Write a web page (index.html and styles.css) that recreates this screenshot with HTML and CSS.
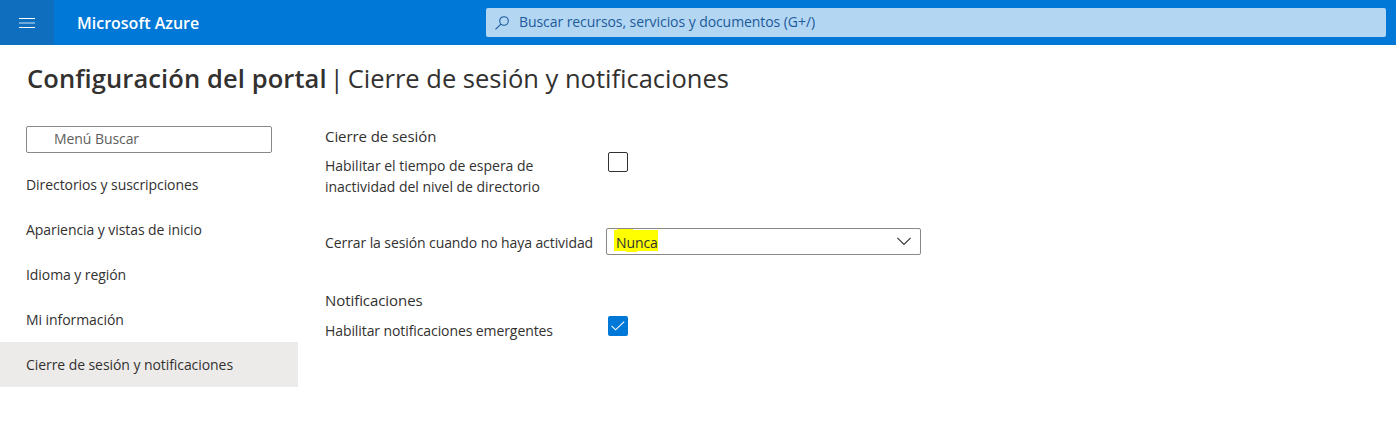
FILE: index.html
```html
<!DOCTYPE html>
<html lang="es">
<head>
<meta charset="utf-8">
<title>Configuración del portal</title>
<link rel="stylesheet" href="styles.css">
</head>
<body>
<header class="topbar">
  <button class="menu-button" aria-label="Menú"><svg width="16" height="10" viewBox="0 0 16 10" shape-rendering="crispEdges"><path fill="#fff" d="M0 0h16v1H0zM0 9h16v1H0z"/><path fill="#6fa8da" d="M0 4h16v2H0z"/></svg></button>
  <div class="brand">Microsoft Azure</div>
  <div class="global-search">
    <svg width="14" height="14" viewBox="0 0 14 14" fill="none" stroke="#1c5a9c" stroke-width="1.1"><circle cx="9" cy="5" r="4.3"/><path d="M5.9 8.1.5 13.4"/></svg>
    <span class="placeholder">Buscar recursos, servicios y documentos (G+/)</span>
  </div>
</header>
<h1 class="page-title"><span class="title-strong">Configuración del portal</span><span class="title-bar">|</span><span>Cierre de sesión y notificaciones</span></h1>
<div class="layout">
  <nav class="sidebar">
    <div class="menu-search">Menú Buscar</div>
    <a class="nav-item">Directorios y suscripciones</a>
    <a class="nav-item">Apariencia y vistas de inicio</a>
    <a class="nav-item">Idioma y región</a>
    <a class="nav-item">Mi información</a>
    <a class="nav-item selected">Cierre de sesión y notificaciones</a>
  </nav>
  <main class="settings">
    <h2 class="section-title">Cierre de sesión</h2>
    <div class="row row-timeout">
      <div class="label">Habilitar el tiempo de espera de<br>inactividad del nivel de directorio</div>
      <div class="checkbox"></div>
    </div>
    <div class="row row-select">
      <div class="label">Cerrar la sesión cuando no haya actividad</div>
      <div class="select"><span class="value">Nunca</span><svg width="14" height="9" viewBox="0 0 14 9" fill="none" stroke="#323130" stroke-width="1.1"><path d="m.4.9 6.6 6.6L13.6.9"/></svg></div>
    </div>
    <h2 class="section-title">Notificaciones</h2>
    <div class="row row-popup">
      <div class="label">Habilitar notificaciones emergentes</div>
      <div class="checkbox checked"><svg width="14" height="10" viewBox="0 0 14 10" fill="none" stroke="#fff" stroke-width="1.1"><path d="m.6 4.8 4 4L13.2.6"/></svg></div>
    </div>
  </main>
</div>
</body>
</html>
```
FILE: styles.css
```css
* { box-sizing: border-box; }
body { margin: 0; background: #fff; color: #323130; font: 14px/20px "Segoe UI", "Open Sans", "Noto Sans", sans-serif; letter-spacing: -0.07px; white-space: nowrap; }
.topbar { display: flex; align-items: center; height: 45px; background: #0078d7; padding-right: 10px; }
.menu-button { display: flex; align-items: center; justify-content: center; width: 54px; height: 45px; border: 0; padding: 0; background: #106ebe; }
.brand { width: 432px; padding-left: 23px; color: #fff; font-size: 16px; font-weight: 600; letter-spacing: 0; }
.global-search { display: flex; align-items: center; flex: 1; height: 29px; gap: 10px; padding-left: 9px; border-radius: 2px; background: #b3d6f2; color: #1c5a9c; }
.placeholder { padding-bottom: 2px; }
.page-title { display: flex; margin: 0; padding: 15px 0 0 27px; font-size: 25.5px; line-height: 36px; font-weight: 400; letter-spacing: 0; }
.title-strong { font-weight: 600; letter-spacing: 0.1px; }
.title-bar { padding: 0 4px 0 3px; }
.layout { display: flex; padding-top: 30px; }
.sidebar { width: 298px; }
.menu-search { width: 246px; height: 27px; margin: 0 0 9px 26px; padding-left: 27px; border: 1px solid #8a8886; border-radius: 2px; line-height: 23px; color: #605e5c; }
.nav-item { display: flex; align-items: center; height: 45px; padding-left: 26px; }
.selected { background: #edebe9; }
.settings { padding-left: 27px; }
.section-title { margin: 0; font-size: 15px; line-height: 20px; font-weight: 400; }
.row { display: flex; }
.label { width: 281px; line-height: 21px; }
.row-timeout { padding-top: 9px; height: 82px; letter-spacing: -0.02px; }
.row-select { height: 62px; align-items: flex-start; letter-spacing: -0.09px; }
.row-select .label { padding-top: 4px; }
.checkbox { width: 20px; height: 20px; margin: -3px 0 0 2px; border: 1px solid #323130; border-radius: 2px; }
.checked { display: flex; align-items: center; justify-content: center; border: 0; background: #0078d7; }
.select { display: flex; align-items: center; justify-content: space-between; width: 315px; height: 27px; padding: 0 9px 0 7px; border: 1px solid #8a8886; border-radius: 2px; }
/* Uneven marker stroke behind the selected value */
.value {
  align-self: flex-start;
  width: 44px;
  height: 23px;
  padding-left: 2px;
  line-height: 28px;
  background:
    linear-gradient(#ff0, #ff0) 0 1px / 44px 21px no-repeat,
    linear-gradient(#ff0, #ff0) 3px 0 / 16px 2px no-repeat,
    linear-gradient(#ff0, #ff0) 12px 21px / 11px 2px no-repeat;
}
.row-popup { padding-top: 9px; letter-spacing: -0.09px; }
.row-popup .label { padding-top: 1px; }
```
